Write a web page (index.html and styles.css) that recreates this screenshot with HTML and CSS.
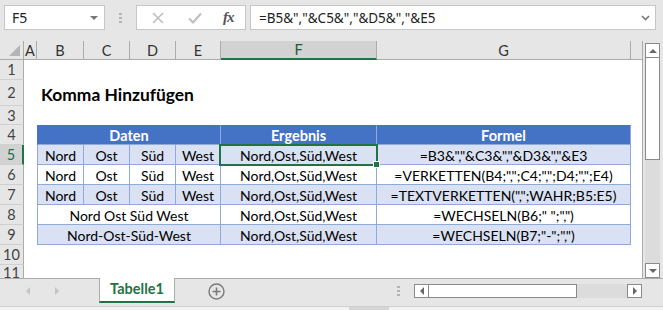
FILE: index.html
```html
<!DOCTYPE html>
<html lang="de">
<head>
    <meta charset="UTF-8">
    <meta name="viewport" content="width=device-width, initial-scale=1.0">
    <title>Komma Hinzufügen</title>
    <link rel="stylesheet" href="styles.css">
</head>
<body>
    <div class="formula-bar">
        <div class="name-box">
            <span>F5</span>
            <span class="caret"></span>
        </div>
        <div class="grip"><i></i><i></i><i></i></div>
        <div class="fx-box">
            <svg class="icon-cancel" width="12" height="12" viewBox="0 0 12 12"><path d="M1 1L11 11M11 1L1 11" stroke="#bdbdbd" stroke-width="1.6" fill="none"/></svg>
            <svg class="icon-enter" width="14" height="12" viewBox="0 0 14 12"><path d="M1 6.5L5 10.5L13 1.5" stroke="#bdbdbd" stroke-width="2" fill="none"/></svg>
            <span class="fx">fx</span>
        </div>
        <div class="formula-input">
            <span>=B5&amp;","&amp;C5&amp;","&amp;D5&amp;","&amp;E5</span>
            <svg width="9" height="6" viewBox="0 0 9 6"><path d="M1 1L4.5 4.5L8 1" stroke="#777" stroke-width="1.6" fill="none"/></svg>
        </div>
    </div>

    <div class="workspace">
        <div class="sheet">
            <!-- column headers -->
            <div class="ch corner"><span class="corner-mark"></span></div>
            <div class="ch">A</div>
            <div class="ch">B</div>
            <div class="ch">C</div>
            <div class="ch">D</div>
            <div class="ch">E</div>
            <div class="ch active">F</div>
            <div class="ch">G</div>
            <div class="ch filler"></div>

            <div class="rh">1</div><div class="blank span-8"></div>

            <div class="rh">2</div><div class="blank"></div>
            <div class="title span-7">Komma Hinzufügen</div>

            <div class="rh">3</div><div class="blank span-8"></div>

            <div class="rh">4</div><div class="blank"></div>
            <div class="cell head first span-4">Daten</div>
            <div class="cell head">Ergebnis</div>
            <div class="cell head">Formel</div>
            <div class="blank edge"></div>

            <div class="rh active">5</div><div class="blank"></div>
            <div class="cell band first">Nord</div>
            <div class="cell band">Ost</div>
            <div class="cell band">Süd</div>
            <div class="cell band">West</div>
            <div class="cell band selected">Nord,Ost,Süd,West</div>
            <div class="cell band">=B3&amp;","&amp;C3&amp;","&amp;D3&amp;","&amp;E3</div>
            <div class="blank edge"></div>

            <div class="rh">6</div><div class="blank"></div>
            <div class="cell first">Nord</div>
            <div class="cell">Ost</div>
            <div class="cell">Süd</div>
            <div class="cell">West</div>
            <div class="cell">Nord,Ost,Süd,West</div>
            <div class="cell">=VERKETTEN(B4;",";C4;",";D4;",";E4)</div>
            <div class="blank edge"></div>

            <div class="rh">7</div><div class="blank"></div>
            <div class="cell band first">Nord</div>
            <div class="cell band">Ost</div>
            <div class="cell band">Süd</div>
            <div class="cell band">West</div>
            <div class="cell band">Nord,Ost,Süd,West</div>
            <div class="cell band">=TEXTVERKETTEN(",";WAHR;B5:E5)</div>
            <div class="blank edge"></div>

            <div class="rh">8</div><div class="blank"></div>
            <div class="cell first span-4">Nord Ost Süd West</div>
            <div class="cell">Nord,Ost,Süd,West</div>
            <div class="cell">=WECHSELN(B6;" ";",")</div>
            <div class="blank edge"></div>

            <div class="rh">9</div><div class="blank"></div>
            <div class="cell band first span-4">Nord-Ost-Süd-West</div>
            <div class="cell band">Nord,Ost,Süd,West</div>
            <div class="cell band">=WECHSELN(B7;"-";",")</div>
            <div class="blank edge"></div>

            <div class="rh">10</div><div class="blank span-8"></div>
            <div class="rh partial">11</div><div class="blank span-8"></div>
        </div>

        <div class="vscroll">
            <div class="sb-btn"><span class="tri up"></span></div>
            <div class="sb-thumb"></div>
            <div class="sb-track"></div>
            <div class="sb-btn"><span class="tri down"></span></div>
        </div>
    </div>

    <div class="tab-bar">
        <div class="tab-nav">
            <span class="tri left light"></span>
            <span class="tri right light"></span>
        </div>
        <div class="sheet-tab">Tabelle1</div>
        <svg class="add-sheet" width="17" height="17" viewBox="0 0 17 17">
            <circle cx="8.5" cy="8.5" r="7.5" stroke="#7a7a7a" stroke-width="1.4" fill="none"/>
            <path d="M8.5 4.5V12.5M4.5 8.5H12.5" stroke="#7a7a7a" stroke-width="1.6"/>
        </svg>
        <div class="spacer"></div>
        <div class="grip small"><i></i><i></i><i></i></div>
        <div class="hscroll">
            <div class="sb-btn"><span class="tri left"></span></div>
            <div class="sb-thumb"></div>
            <div class="sb-track"></div>
            <div class="sb-btn"><span class="tri right"></span></div>
        </div>
    </div>
    <div class="status-strip"><span></span></div>
</body>
</html>
```

FILE: styles.css
```css
body, html {
    margin: 0;
    padding: 0;
}

body {
    width: 663px;
    height: 310px;
    overflow: hidden;
    background-color: #e6e6e6;
    font-family: 'Lato', 'Liberation Sans', sans-serif;
    color: #000;
}

/* formula bar */
.formula-bar {
    display: flex;
    align-items: flex-start;
    height: 41px;
    padding: 5px 0 0 4px;
    box-sizing: border-box;
    font-family: 'Noto Sans', 'Liberation Sans', sans-serif;
    font-size: 13.5px;
    color: #222;
}

.name-box {
    display: flex;
    align-items: center;
    justify-content: space-between;
    width: 101px;
    height: 25px;
    padding: 0 6px 0 7px;
    box-sizing: border-box;
    background-color: #fff;
    border: 1px solid #c6c6c6;
    font-size: 14px;
}

.caret {
    width: 0;
    height: 0;
    border-left: 4px solid transparent;
    border-right: 4px solid transparent;
    border-top: 4px solid #777;
}

.grip {
    display: flex;
    flex-direction: column;
    gap: 2px;
    margin: 8px 14px 0 14px;
}

.grip i {
    display: block;
    width: 3px;
    height: 2px;
    background-color: #b4b4b4;
}

.fx-box {
    display: flex;
    align-items: center;
    width: 110px;
    height: 25px;
    box-sizing: border-box;
    background-color: #fff;
    border: 1px solid #c6c6c6;
}

.icon-cancel {
    margin-left: 15px;
}

.icon-enter {
    margin-left: 24px;
}

.fx {
    margin-left: 21px;
    font-family: 'Liberation Serif', serif;
    font-style: italic;
    font-weight: bold;
    font-size: 15px;
    color: #555;
    letter-spacing: -1px;
}

.formula-input {
    display: flex;
    align-items: center;
    justify-content: space-between;
    width: 406px;
    height: 25px;
    margin-left: 4px;
    padding: 0 5px 0 8px;
    box-sizing: border-box;
    background-color: #fff;
    border: 1px solid #c6c6c6;
}

/* sheet */
.workspace {
    display: flex;
    height: 237px;
}

.sheet {
    display: grid;
    grid-template-columns: 24px 13px 47px 46px 46px 45px 156px 254px 11px;
    grid-template-rows: 19px 20px 26px 19px repeat(7, 20px) 13px;
    width: 642px;
    overflow: hidden;
    background-color: #fff;
    border-right: 1px solid #ababab;
    font-size: 14px;
}

.ch {
    display: flex;
    align-items: center;
    justify-content: center;
    background-color: #e6e6e6;
    border-right: 1px solid #ababab;
    border-bottom: 1px solid #ababab;
    box-sizing: border-box;
    color: #333;
    font-size: 14.5px;
}

.ch.corner {
    position: relative;
}

.corner-mark {
    position: absolute;
    right: 3px;
    bottom: 3px;
    width: 0;
    height: 0;
    border-left: 11px solid transparent;
    border-bottom: 11px solid #b4b4b4;
}

.ch.active {
    background-color: #d2d2d2;
    border-bottom: 2px solid #217346;
    color: #1e5b38;
}

.ch.filler {
    border-right: none;
}

.rh {
    display: flex;
    align-items: center;
    justify-content: center;
    background-color: #e6e6e6;
    border-right: 1px solid #ababab;
    border-bottom: 1px solid #d0d0d0;
    box-sizing: border-box;
    color: #444;
    font-size: 14.5px;
}

.rh.partial {
    align-items: flex-start;
    line-height: 16px;
    border-bottom: none;
}

.rh.active {
    background-color: #d2d2d2;
    border-right: 2px solid #217346;
    color: #217346;
}

.blank {
    background-color: #fff;
}

.span-8 {
    grid-column: span 8;
}

.span-7 {
    grid-column: span 7;
}

.span-4 {
    grid-column: span 4;
}

.title {
    display: flex;
    align-items: center;
    padding: 3px 0 0 4px;
    font-size: 17.4px;
    font-weight: bold;
}

.cell {
    display: flex;
    align-items: center;
    justify-content: center;
    white-space: nowrap;
    background-color: #fff;
    border-right: 1px solid #8ea9db;
    border-bottom: 1px solid #8ea9db;
    box-sizing: border-box;
    padding-top: 1px;
}

.cell.first {
    border-left: 1px solid #8ea9db;
}

.cell.band {
    background-color: #d9e1f2;
}

.cell.head {
    background-color: #4472c4;
    color: #fff;
    font-weight: bold;
    font-size: 14.5px;
    border-top: 1px solid #4472c4;
    border-bottom-color: #8ea9db;
}

.cell.head.first {
    border-left-color: #4472c4;
}

.cell.selected {
    position: relative;
}

.cell.selected::before {
    content: '';
    position: absolute;
    left: -2px;
    top: -1px;
    right: -2px;
    bottom: -2px;
    border: 2px solid #217346;
    z-index: 1;
}

.cell.selected::after {
    content: '';
    position: absolute;
    right: -4px;
    bottom: -4px;
    width: 5px;
    height: 5px;
    background-color: #217346;
    border: 1px solid #fff;
    z-index: 2;
}

/* scrollbars */
.vscroll {
    display: flex;
    flex-direction: column;
    width: 15px;
    padding: 2px 0 0 2px;
}

.sb-btn {
    display: flex;
    align-items: center;
    justify-content: center;
    width: 15px;
    height: 15px;
    box-sizing: border-box;
    background-color: #fff;
    border: 1px solid #8a8a8a;
}

.vscroll .sb-thumb {
    height: 102px;
    box-sizing: border-box;
    background-color: #fff;
    border: 1px solid #8a8a8a;
    border-top: none;
}

.sb-track {
    flex: 1;
    background-color: #dcdcdc;
}

.tri {
    width: 0;
    height: 0;
}

.tri.up {
    border-left: 4px solid transparent;
    border-right: 4px solid transparent;
    border-bottom: 4px solid #666;
}

.tri.down {
    border-left: 4px solid transparent;
    border-right: 4px solid transparent;
    border-top: 4px solid #666;
}

.tri.left {
    border-top: 4px solid transparent;
    border-bottom: 4px solid transparent;
    border-right: 4px solid #666;
}

.tri.right {
    border-top: 4px solid transparent;
    border-bottom: 4px solid transparent;
    border-left: 4px solid #666;
}

.tri.light.left {
    border-right-color: #c4c4c4;
}

.tri.light.right {
    border-left-color: #c4c4c4;
}

/* sheet tabs */
.tab-bar {
    display: flex;
    align-items: center;
    height: 25px;
    border-top: 1px solid #ababab;
    box-sizing: border-box;
}

.tab-nav {
    display: flex;
    align-items: center;
    gap: 25px;
    width: 99px;
    padding-left: 26px;
    box-sizing: border-box;
}

.sheet-tab {
    align-self: stretch;
    width: 76px;
    margin-top: -1px;
    box-sizing: border-box;
    background-color: #fff;
    border-left: 1px solid #ababab;
    border-right: 1px solid #ababab;
    border-bottom: 2px solid #217346;
    text-align: center;
    line-height: 22px;
    font-size: 14.5px;
    font-weight: bold;
    color: #217346;
}

.add-sheet {
    margin-left: 33px;
}

.spacer {
    flex: 1;
}

.grip.small {
    margin: 0 14px 0 0;
}

.hscroll {
    display: flex;
    width: 228px;
    height: 14px;
    margin-right: 21px;
}

.hscroll .sb-btn {
    height: 14px;
}

.hscroll .sb-thumb {
    width: 148px;
    box-sizing: border-box;
    background-color: #fff;
    border: 1px solid #8a8a8a;
    border-left: none;
}

.status-strip {
    height: 4px;
    margin-top: 3px;
    border-top: 1px solid #cfcfcf;
    background-color: #f2f2f2;
}

.status-strip span {
    display: block;
    width: 40px;
    height: 4px;
    margin-left: 349px;
    background-color: #d6d6d6;
}
```
